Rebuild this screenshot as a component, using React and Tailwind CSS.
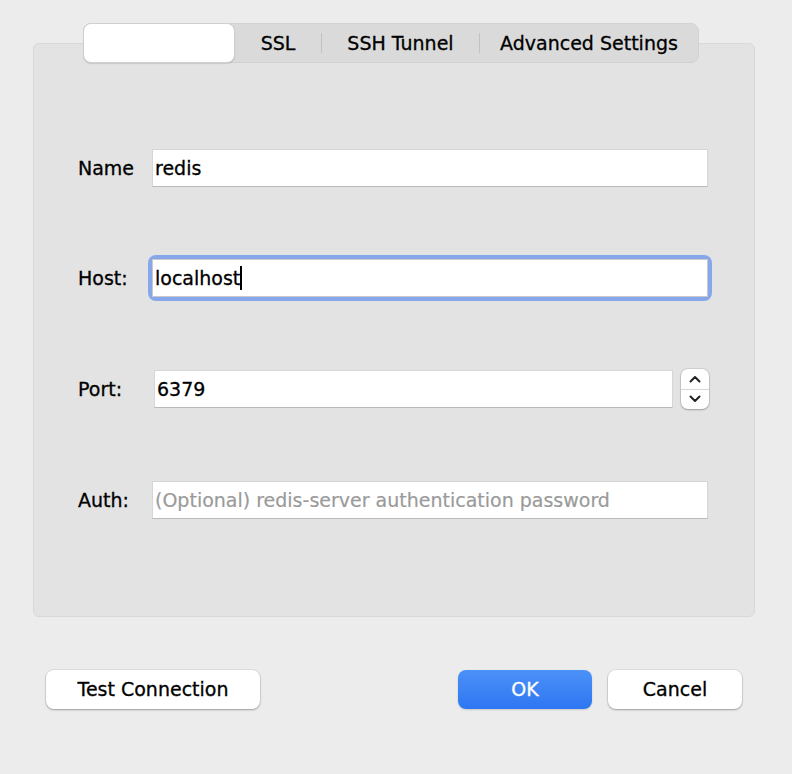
import React from 'react';

const font = { fontFamily: '"DejaVu Sans", "Liberation Sans", sans-serif' };

const Field = ({ value, placeholder, className = '' }) => (
  <div
    className={`h-[38px] bg-white border border-[#d6d6d6] border-b-[#b9b9b9] flex items-center px-[2px] text-[19px] ${className}`}
  >
    {value ? (
      <span className="text-black [-webkit-text-stroke:0.3px_black]">{value}</span>
    ) : (
      <span className="text-[#9a9a9a] [-webkit-text-stroke:0.2px_#9a9a9a]">{placeholder}</span>
    )}
  </div>
);

const Label = ({ children }) => (
  <div className="w-[74px] text-[19px] text-black shrink-0 [-webkit-text-stroke:0.3px_black]">{children}</div>
);

const App = () => {
  return (
    <div className="w-[792px] h-[774px] bg-[#ececec] flex flex-col" style={font}>
      {/* Panel */}
      <div className="mt-[43px] ml-[33px] w-[722px] h-[574px] bg-[#e3e3e3] border border-[#d8d8d8] rounded-[6px] flex flex-col">
        {/* Tabs */}
        <div className="-mt-[21px] ml-[49px] w-[616px] h-[40px] bg-[#dadada] border border-[#d2d2d2] rounded-[8px] flex items-center text-[19px] text-black [-webkit-text-stroke:0.3px_black]">
          <div className="w-[152px] h-[40px] -ml-px bg-white rounded-[8px] border border-[#cfcfcf] shadow-[0_1px_1px_rgba(0,0,0,0.12)]" />
          <div className="w-[86px] text-center">SSL</div>
          <div className="w-px h-[20px] bg-[#c2c2c2]" />
          <div className="w-[157px] text-center">SSH Tunnel</div>
          <div className="w-px h-[20px] bg-[#c2c2c2]" />
          <div className="flex-1 text-center">Advanced Settings</div>
        </div>

        {/* Form */}
        <div className="flex flex-col pl-[44px] mt-[85px]">
          <div className="flex items-center h-[40px]">
            <Label>Name</Label>
            <Field value="redis" className="w-[556px]" />
          </div>

          <div className="flex items-center h-[40px] mt-[70px]">
            <Label>Host:</Label>
            <div className="rounded-[4px] ring-[4px] ring-[#86a8ea]">
              <div className="h-[38px] w-[556px] bg-white border border-[#c9c9c9] flex items-center px-[2px] text-[19px]">
                <span className="text-black [-webkit-text-stroke:0.3px_black]">localhost</span>
                <span className="w-[2px] h-[24px] bg-black" />
              </div>
            </div>
          </div>

          <div className="flex items-center h-[40px] mt-[71px]">
            <Label>Port:</Label>
            <Field value="6379" className="w-[519px] ml-[2px] h-[37px]" />
            <div className="ml-[8px] w-[28px] h-[40px] bg-white rounded-[7px] shadow-[0_0_0_1px_rgba(0,0,0,0.08),0_1px_2px_rgba(0,0,0,0.25)] flex flex-col">
              <div className="flex-1 flex items-center justify-center border-b border-[#d6d6d6]">
                <svg width="12" height="8" viewBox="0 0 12 8">
                  <path d="M1.5 6.5 L6 2 L10.5 6.5" fill="none" stroke="#222" strokeWidth="2" strokeLinecap="round" strokeLinejoin="round" />
                </svg>
              </div>
              <div className="flex-1 flex items-center justify-center">
                <svg width="12" height="8" viewBox="0 0 12 8">
                  <path d="M1.5 1.5 L6 6 L10.5 1.5" fill="none" stroke="#222" strokeWidth="2" strokeLinecap="round" strokeLinejoin="round" />
                </svg>
              </div>
            </div>
          </div>

          <div className="flex items-center h-[40px] mt-[71px]">
            <Label>Auth:</Label>
            <Field placeholder="(Optional) redis-server authentication password" className="w-[556px]" />
          </div>
        </div>
      </div>

      {/* Buttons */}
      <div className="flex items-center mt-[53px] pl-[46px] pr-[50px] text-[19px] [-webkit-text-stroke:0.3px_currentColor]">
        <button className="w-[214px] h-[39px] bg-white rounded-[8px] shadow-[0_0_0_1px_rgba(0,0,0,0.06),0_1px_2px_rgba(0,0,0,0.3)] text-black">
          Test Connection
        </button>
        <div className="flex-1" />
        <button className="w-[134px] h-[39px] rounded-[8px] bg-gradient-to-b from-[#4c91f8] to-[#2e76f2] text-white shadow-[0_1px_2px_rgba(0,0,0,0.15)]">
          OK
        </button>
        <button className="ml-[16px] w-[134px] h-[39px] bg-white rounded-[8px] shadow-[0_0_0_1px_rgba(0,0,0,0.06),0_1px_2px_rgba(0,0,0,0.3)] text-black">
          Cancel
        </button>
      </div>
    </div>
  );
};

export default App;
